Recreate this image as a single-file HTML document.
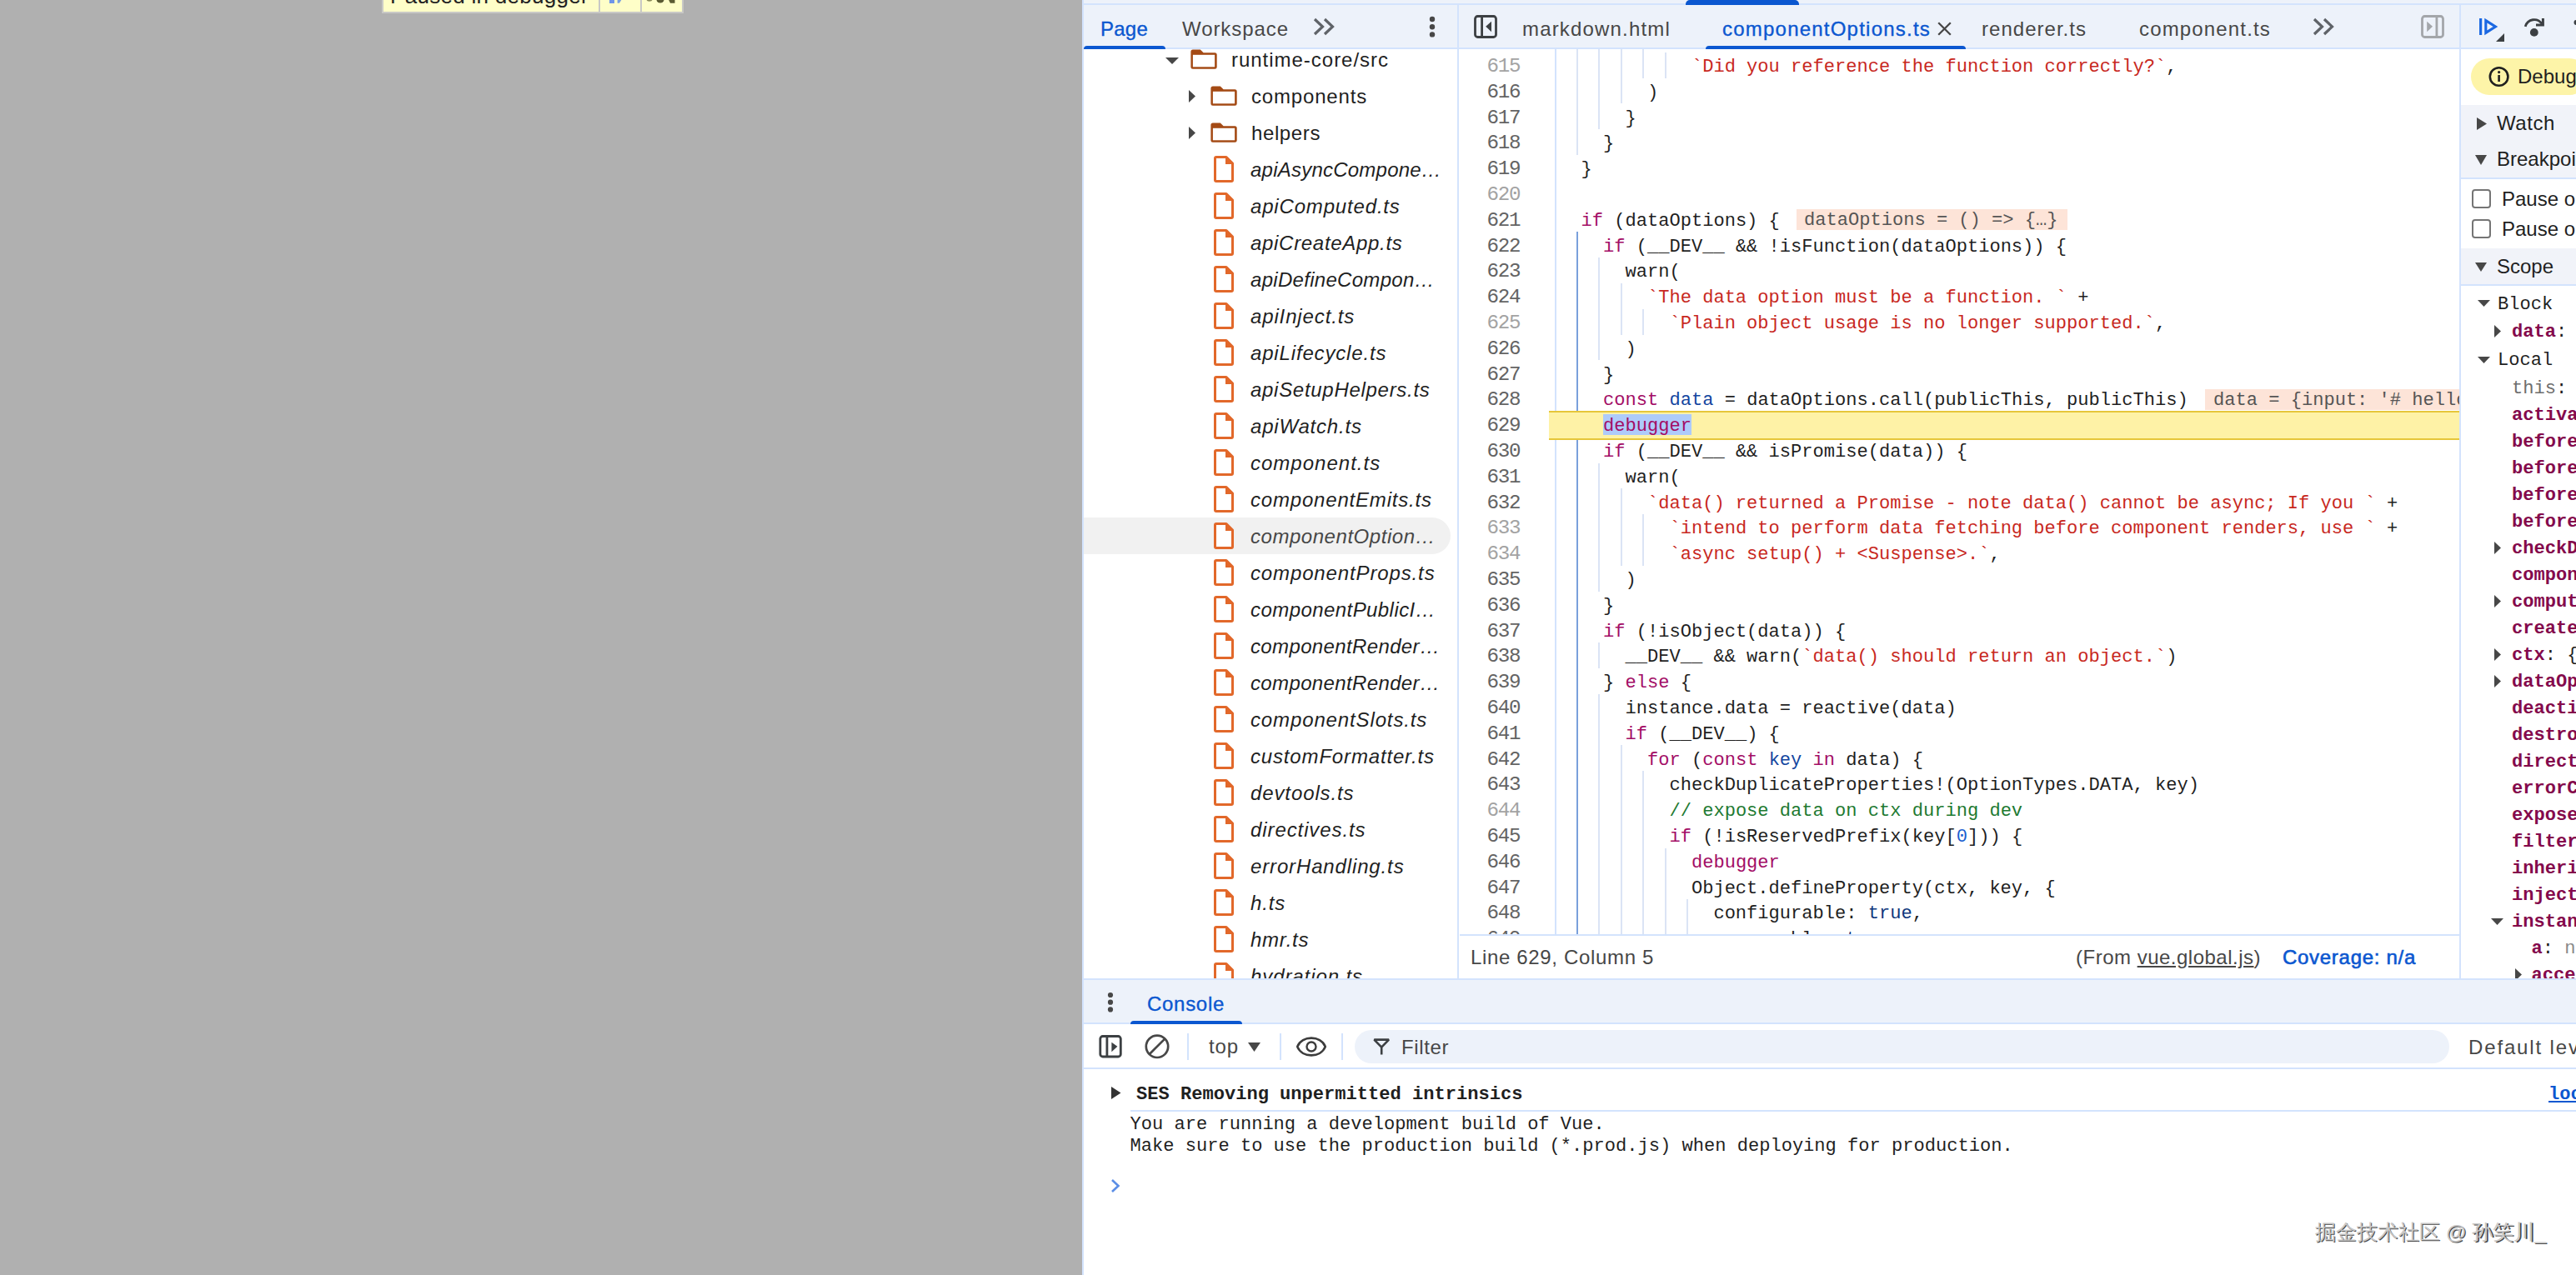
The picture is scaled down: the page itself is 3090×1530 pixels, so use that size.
<!DOCTYPE html>
<html><head><meta charset="utf-8"><title>DevTools</title>
<style>
html,body{margin:0;padding:0;width:3090px;height:1530px;overflow:hidden;background:#fff;}
body{position:relative;font-family:'Liberation Sans', sans-serif;}
div{position:absolute;box-sizing:border-box;}
.t{white-space:pre;}
svg{display:block;}
</style></head><body>
<div style="left:0px;top:0px;width:1298px;height:1530px;background:#b0b0b0;"></div>
<div style="left:458px;top:-40px;width:362px;height:56px;background:#c9c9c6;"></div>
<div style="left:460px;top:-40px;width:258px;height:54px;background:#fefec8;"></div>
<div style="left:720px;top:-40px;width:48px;height:54px;background:#fefec8;"></div>
<div style="left:770px;top:-40px;width:48px;height:54px;background:#fefec8;"></div>
<div class="t" style="left:468.00px;top:-18.01px;font-family:'Liberation Sans', sans-serif;font-size:26px;line-height:26px;color:#222;font-weight:400;font-style:normal;;letter-spacing:0.292px;">Paused in debugger</div>
<div style="left:731px;top:-14px;width:6px;height:18px;background:#6f95e8"></div>
<svg style="position:absolute;left:740px;top:-6px;" width="10" height="10" viewBox="0 0 10 10"><path d="M0.6 0 L9 0 L3 9.8 L0.6 9.8 Z" fill="#7aa0e0"/></svg>
<svg style="position:absolute;left:770px;top:-10px;" width="48" height="14" viewBox="0 0 48 14"><ellipse cx="9" cy="9.5" rx="3.5" ry="2.2" fill="#8a8a5a"/><circle cx="22" cy="9" r="4.6" fill="#5a5a32"/><path d="M29.5 4 L39.5 4 L39.5 13.8 L34 13.8 Z" fill="#5a5a32"/></svg>
<div style="left:1298px;top:0px;width:2px;height:1530px;background:#d3e3fd;"></div>
<div style="left:1300px;top:0px;width:1790px;height:1530px;background:#ffffff;"></div>
<div style="left:1300px;top:0px;width:1790px;height:4px;background:#edf2fa;"></div>
<div style="left:1300px;top:4px;width:1790px;height:2px;background:#d3e3fd;"></div>
<div style="left:2022px;top:0px;width:136px;height:6px;background:#0b57d0;border-radius:5px 5px 0 0"></div>
<div style="left:1300px;top:6px;width:1790px;height:51px;background:#edf2fa;"></div>
<div style="left:1300px;top:57px;width:1790px;height:2px;background:#d3e3fd;"></div>
<div style="left:1748px;top:6px;width:2px;height:1169px;background:#d3e3fd;"></div>
<div style="left:2950px;top:6px;width:2px;height:1169px;background:#d3e3fd;"></div>
<div class="t" style="left:1320.00px;top:22.68px;font-family:'Liberation Sans', sans-serif;font-size:24px;line-height:24px;color:#0b57d0;font-weight:400;font-style:normal;-webkit-text-stroke:0.35px #0b57d0;;letter-spacing:0.234px;">Page</div>
<div style="left:1300px;top:55px;width:98px;height:4px;background:#0b57d0;border-radius:4px 4px 0 0"></div>
<div class="t" style="left:1418.00px;top:22.68px;font-family:'Liberation Sans', sans-serif;font-size:24px;line-height:24px;color:#474747;font-weight:400;font-style:normal;;letter-spacing:0.932px;">Workspace</div>
<svg style="position:absolute;left:1575px;top:21px;" width="26" height="22" viewBox="0 0 26 22"><path d="M2 2 L11.5 11 L2 20 M14 2 L23.5 11 L14 20" fill="none" stroke="#5f6368" stroke-width="3.2"/></svg>
<svg style="position:absolute;left:1712px;top:19px;" width="12" height="27.4" viewBox="0 0 12 27.4"><circle cx="6" cy="4.0" r="3.2" fill="#474747"/><circle cx="6" cy="13.2" r="3.2" fill="#474747"/><circle cx="6" cy="22.4" r="3.2" fill="#474747"/></svg>
<svg style="position:absolute;left:1766px;top:16px;" width="32" height="32" viewBox="0 0 32 32"><rect x="3.5" y="3.5" width="25" height="25" rx="3" fill="none" stroke="#3c4043" stroke-width="2.8"/><rect x="10.2" y="3" width="2.8" height="26" fill="#3c4043"/><path d="M16.2 15.7 L23 9.7 L23 22.2 Z" fill="#3c4043"/></svg>
<div class="t" style="left:1826.00px;top:22.68px;font-family:'Liberation Sans', sans-serif;font-size:24px;line-height:24px;color:#474747;font-weight:400;font-style:normal;;letter-spacing:1.175px;">markdown.html</div>
<div class="t" style="left:2066.00px;top:22.68px;font-family:'Liberation Sans', sans-serif;font-size:24px;line-height:24px;color:#0b57d0;font-weight:400;font-style:normal;-webkit-text-stroke:0.35px #0b57d0;;letter-spacing:1.221px;">componentOptions.ts</div>
<svg style="position:absolute;left:2322px;top:24px;" width="20" height="20" viewBox="0 0 20 20"><path d="M3.2 3.2 L17.8 17.8 M17.8 3.2 L3.2 17.8" stroke="#474747" stroke-width="2.3"/></svg>
<div style="left:2046px;top:55px;width:312px;height:4px;background:#0b57d0;border-radius:4px 4px 0 0"></div>
<div class="t" style="left:2377.00px;top:22.68px;font-family:'Liberation Sans', sans-serif;font-size:24px;line-height:24px;color:#474747;font-weight:400;font-style:normal;;letter-spacing:1.024px;">renderer.ts</div>
<div class="t" style="left:2566.00px;top:22.68px;font-family:'Liberation Sans', sans-serif;font-size:24px;line-height:24px;color:#474747;font-weight:400;font-style:normal;;letter-spacing:1.159px;">component.ts</div>
<svg style="position:absolute;left:2774px;top:21px;" width="26" height="22" viewBox="0 0 26 22"><path d="M2 2 L11.5 11 L2 20 M14 2 L23.5 11 L14 20" fill="none" stroke="#5f6368" stroke-width="3.2"/></svg>
<svg style="position:absolute;left:2902px;top:16px;" width="32" height="32" viewBox="0 0 32 32"><rect x="3.5" y="3.5" width="25" height="25" rx="3" fill="none" stroke="#a3a6aa" stroke-width="2.8"/><rect x="19.5" y="3" width="2.8" height="26" fill="#a3a6aa"/><path d="M16 15.7 L9.2 9.7 L9.2 22.2 Z" fill="#a3a6aa"/></svg>
<svg style="position:absolute;left:2970px;top:18px;" width="40" height="36" viewBox="0 0 40 36"><rect x="4" y="4" width="3.2" height="20" fill="#1b68e2"/><path d="M11.8 6.6 L23.4 14 L11.8 21.4 Z" fill="none" stroke="#1b68e2" stroke-width="3.1"/><path d="M34 22 L34 32 L24 32 Z" fill="#3c4043"/></svg>
<svg style="position:absolute;left:3024px;top:16px;" width="36" height="30" viewBox="0 0 36 30"><path d="M5.2 15.8 C8 6.6, 19.5 4.6, 25.2 12.6" fill="none" stroke="#3c4043" stroke-width="2.8"/><path d="M24.9 6 L27.9 6 L27.9 15.6 L18 15.6 L18 12.6 L24.9 12.6 Z" fill="#3c4043"/><circle cx="15.8" cy="22.9" r="4.9" fill="#3c4043"/></svg>
<svg style="position:absolute;left:3082px;top:20px;" width="8" height="20" viewBox="0 0 8 20"><circle cx="8.5" cy="7" r="3" fill="#3c4043"/></svg>
<div style="left:1300px;top:621px;width:440px;height:44px;background:#f1f1f1;border-radius:0 22px 22px 0"></div>
<svg style="position:absolute;left:1398px;top:68.5px;" width="16" height="8" viewBox="0 0 16 8"><path d="M0 0 L16 0 L8.0 8 Z" fill="#474747"/></svg>
<svg style="position:absolute;left:1428px;top:58.7px;" width="33" height="25" viewBox="0 0 33 25"><path d="M0.4 3 Q0.4 0.5 2.9 0.5 L11.8 0.5 L15.6 4.3 L29.2 4.3 Q31.7 4.3 31.7 6.8 L31.7 21.4 Q31.7 23.8 29.3 23.8 L2.8 23.8 Q0.4 23.8 0.4 21.4 Z" fill="#a44a14"/><rect x="2.9" y="6.8" width="26.2" height="14.5" fill="#fff"/></svg>
<div class="t" style="left:1477.00px;top:59.68px;font-family:'Liberation Sans', sans-serif;font-size:24px;line-height:24px;color:#1f1f1f;font-weight:400;font-style:normal;;letter-spacing:0.977px;">runtime-core/src</div>
<svg style="position:absolute;left:1426px;top:108.0px;" width="8" height="15" viewBox="0 0 8 15"><path d="M0 0 L8 7.5 L0 15 Z" fill="#474747"/></svg>
<svg style="position:absolute;left:1452px;top:102.7px;" width="33" height="25" viewBox="0 0 33 25"><path d="M0.4 3 Q0.4 0.5 2.9 0.5 L11.8 0.5 L15.6 4.3 L29.2 4.3 Q31.7 4.3 31.7 6.8 L31.7 21.4 Q31.7 23.8 29.3 23.8 L2.8 23.8 Q0.4 23.8 0.4 21.4 Z" fill="#a44a14"/><rect x="2.9" y="6.8" width="26.2" height="14.5" fill="#fff"/></svg>
<div class="t" style="left:1501.00px;top:103.68px;font-family:'Liberation Sans', sans-serif;font-size:24px;line-height:24px;color:#1f1f1f;font-weight:400;font-style:normal;;letter-spacing:0.825px;">components</div>
<svg style="position:absolute;left:1426px;top:152.0px;" width="8" height="15" viewBox="0 0 8 15"><path d="M0 0 L8 7.5 L0 15 Z" fill="#474747"/></svg>
<svg style="position:absolute;left:1452px;top:146.7px;" width="33" height="25" viewBox="0 0 33 25"><path d="M0.4 3 Q0.4 0.5 2.9 0.5 L11.8 0.5 L15.6 4.3 L29.2 4.3 Q31.7 4.3 31.7 6.8 L31.7 21.4 Q31.7 23.8 29.3 23.8 L2.8 23.8 Q0.4 23.8 0.4 21.4 Z" fill="#a44a14"/><rect x="2.9" y="6.8" width="26.2" height="14.5" fill="#fff"/></svg>
<div class="t" style="left:1501.00px;top:147.68px;font-family:'Liberation Sans', sans-serif;font-size:24px;line-height:24px;color:#1f1f1f;font-weight:400;font-style:normal;;letter-spacing:0.612px;">helpers</div>
<svg style="position:absolute;left:1456px;top:186.9px;" width="24" height="32" viewBox="0 0 24 32"><path d="M1.5 3 Q1.5 1.5 3 1.5 L15 1.5 L22.5 9 L22.5 29 Q22.5 30.5 21 30.5 L3 30.5 Q1.5 30.5 1.5 29 Z" fill="#fff" stroke="#e2682a" stroke-width="3" stroke-linejoin="round"/><path d="M14 1.5 L22.5 10 L14 10 Z" fill="#e2682a"/></svg>
<div class="t" style="left:1500.00px;top:191.68px;font-family:'Liberation Sans', sans-serif;font-size:24px;line-height:24px;color:#1f1f1f;font-weight:400;font-style:italic;;letter-spacing:0.228px;">apiAsyncCompone…</div>
<svg style="position:absolute;left:1456px;top:230.9px;" width="24" height="32" viewBox="0 0 24 32"><path d="M1.5 3 Q1.5 1.5 3 1.5 L15 1.5 L22.5 9 L22.5 29 Q22.5 30.5 21 30.5 L3 30.5 Q1.5 30.5 1.5 29 Z" fill="#fff" stroke="#e2682a" stroke-width="3" stroke-linejoin="round"/><path d="M14 1.5 L22.5 10 L14 10 Z" fill="#e2682a"/></svg>
<div class="t" style="left:1500.00px;top:235.68px;font-family:'Liberation Sans', sans-serif;font-size:24px;line-height:24px;color:#1f1f1f;font-weight:400;font-style:italic;;letter-spacing:0.829px;">apiComputed.ts</div>
<svg style="position:absolute;left:1456px;top:274.9px;" width="24" height="32" viewBox="0 0 24 32"><path d="M1.5 3 Q1.5 1.5 3 1.5 L15 1.5 L22.5 9 L22.5 29 Q22.5 30.5 21 30.5 L3 30.5 Q1.5 30.5 1.5 29 Z" fill="#fff" stroke="#e2682a" stroke-width="3" stroke-linejoin="round"/><path d="M14 1.5 L22.5 10 L14 10 Z" fill="#e2682a"/></svg>
<div class="t" style="left:1500.00px;top:279.68px;font-family:'Liberation Sans', sans-serif;font-size:24px;line-height:24px;color:#1f1f1f;font-weight:400;font-style:italic;;letter-spacing:0.693px;">apiCreateApp.ts</div>
<svg style="position:absolute;left:1456px;top:318.9px;" width="24" height="32" viewBox="0 0 24 32"><path d="M1.5 3 Q1.5 1.5 3 1.5 L15 1.5 L22.5 9 L22.5 29 Q22.5 30.5 21 30.5 L3 30.5 Q1.5 30.5 1.5 29 Z" fill="#fff" stroke="#e2682a" stroke-width="3" stroke-linejoin="round"/><path d="M14 1.5 L22.5 10 L14 10 Z" fill="#e2682a"/></svg>
<div class="t" style="left:1500.00px;top:323.68px;font-family:'Liberation Sans', sans-serif;font-size:24px;line-height:24px;color:#1f1f1f;font-weight:400;font-style:italic;;letter-spacing:0.298px;">apiDefineCompon…</div>
<svg style="position:absolute;left:1456px;top:362.9px;" width="24" height="32" viewBox="0 0 24 32"><path d="M1.5 3 Q1.5 1.5 3 1.5 L15 1.5 L22.5 9 L22.5 29 Q22.5 30.5 21 30.5 L3 30.5 Q1.5 30.5 1.5 29 Z" fill="#fff" stroke="#e2682a" stroke-width="3" stroke-linejoin="round"/><path d="M14 1.5 L22.5 10 L14 10 Z" fill="#e2682a"/></svg>
<div class="t" style="left:1500.00px;top:367.68px;font-family:'Liberation Sans', sans-serif;font-size:24px;line-height:24px;color:#1f1f1f;font-weight:400;font-style:italic;;letter-spacing:0.864px;">apiInject.ts</div>
<svg style="position:absolute;left:1456px;top:406.9px;" width="24" height="32" viewBox="0 0 24 32"><path d="M1.5 3 Q1.5 1.5 3 1.5 L15 1.5 L22.5 9 L22.5 29 Q22.5 30.5 21 30.5 L3 30.5 Q1.5 30.5 1.5 29 Z" fill="#fff" stroke="#e2682a" stroke-width="3" stroke-linejoin="round"/><path d="M14 1.5 L22.5 10 L14 10 Z" fill="#e2682a"/></svg>
<div class="t" style="left:1500.00px;top:411.68px;font-family:'Liberation Sans', sans-serif;font-size:24px;line-height:24px;color:#1f1f1f;font-weight:400;font-style:italic;;letter-spacing:0.837px;">apiLifecycle.ts</div>
<svg style="position:absolute;left:1456px;top:450.9px;" width="24" height="32" viewBox="0 0 24 32"><path d="M1.5 3 Q1.5 1.5 3 1.5 L15 1.5 L22.5 9 L22.5 29 Q22.5 30.5 21 30.5 L3 30.5 Q1.5 30.5 1.5 29 Z" fill="#fff" stroke="#e2682a" stroke-width="3" stroke-linejoin="round"/><path d="M14 1.5 L22.5 10 L14 10 Z" fill="#e2682a"/></svg>
<div class="t" style="left:1500.00px;top:455.68px;font-family:'Liberation Sans', sans-serif;font-size:24px;line-height:24px;color:#1f1f1f;font-weight:400;font-style:italic;;letter-spacing:0.707px;">apiSetupHelpers.ts</div>
<svg style="position:absolute;left:1456px;top:494.9px;" width="24" height="32" viewBox="0 0 24 32"><path d="M1.5 3 Q1.5 1.5 3 1.5 L15 1.5 L22.5 9 L22.5 29 Q22.5 30.5 21 30.5 L3 30.5 Q1.5 30.5 1.5 29 Z" fill="#fff" stroke="#e2682a" stroke-width="3" stroke-linejoin="round"/><path d="M14 1.5 L22.5 10 L14 10 Z" fill="#e2682a"/></svg>
<div class="t" style="left:1500.00px;top:499.68px;font-family:'Liberation Sans', sans-serif;font-size:24px;line-height:24px;color:#1f1f1f;font-weight:400;font-style:italic;;letter-spacing:0.795px;">apiWatch.ts</div>
<svg style="position:absolute;left:1456px;top:538.9px;" width="24" height="32" viewBox="0 0 24 32"><path d="M1.5 3 Q1.5 1.5 3 1.5 L15 1.5 L22.5 9 L22.5 29 Q22.5 30.5 21 30.5 L3 30.5 Q1.5 30.5 1.5 29 Z" fill="#fff" stroke="#e2682a" stroke-width="3" stroke-linejoin="round"/><path d="M14 1.5 L22.5 10 L14 10 Z" fill="#e2682a"/></svg>
<div class="t" style="left:1500.00px;top:543.68px;font-family:'Liberation Sans', sans-serif;font-size:24px;line-height:24px;color:#1f1f1f;font-weight:400;font-style:italic;;letter-spacing:1.009px;">component.ts</div>
<svg style="position:absolute;left:1456px;top:582.9px;" width="24" height="32" viewBox="0 0 24 32"><path d="M1.5 3 Q1.5 1.5 3 1.5 L15 1.5 L22.5 9 L22.5 29 Q22.5 30.5 21 30.5 L3 30.5 Q1.5 30.5 1.5 29 Z" fill="#fff" stroke="#e2682a" stroke-width="3" stroke-linejoin="round"/><path d="M14 1.5 L22.5 10 L14 10 Z" fill="#e2682a"/></svg>
<div class="t" style="left:1500.00px;top:587.68px;font-family:'Liberation Sans', sans-serif;font-size:24px;line-height:24px;color:#1f1f1f;font-weight:400;font-style:italic;;letter-spacing:0.812px;">componentEmits.ts</div>
<svg style="position:absolute;left:1456px;top:626.9px;" width="24" height="32" viewBox="0 0 24 32"><path d="M1.5 3 Q1.5 1.5 3 1.5 L15 1.5 L22.5 9 L22.5 29 Q22.5 30.5 21 30.5 L3 30.5 Q1.5 30.5 1.5 29 Z" fill="#fff" stroke="#e2682a" stroke-width="3" stroke-linejoin="round"/><path d="M14 1.5 L22.5 10 L14 10 Z" fill="#e2682a"/></svg>
<div class="t" style="left:1500.00px;top:631.68px;font-family:'Liberation Sans', sans-serif;font-size:24px;line-height:24px;color:#474747;font-weight:400;font-style:italic;;letter-spacing:0.539px;">componentOption…</div>
<svg style="position:absolute;left:1456px;top:670.9px;" width="24" height="32" viewBox="0 0 24 32"><path d="M1.5 3 Q1.5 1.5 3 1.5 L15 1.5 L22.5 9 L22.5 29 Q22.5 30.5 21 30.5 L3 30.5 Q1.5 30.5 1.5 29 Z" fill="#fff" stroke="#e2682a" stroke-width="3" stroke-linejoin="round"/><path d="M14 1.5 L22.5 10 L14 10 Z" fill="#e2682a"/></svg>
<div class="t" style="left:1500.00px;top:675.68px;font-family:'Liberation Sans', sans-serif;font-size:24px;line-height:24px;color:#1f1f1f;font-weight:400;font-style:italic;;letter-spacing:0.866px;">componentProps.ts</div>
<svg style="position:absolute;left:1456px;top:714.9px;" width="24" height="32" viewBox="0 0 24 32"><path d="M1.5 3 Q1.5 1.5 3 1.5 L15 1.5 L22.5 9 L22.5 29 Q22.5 30.5 21 30.5 L3 30.5 Q1.5 30.5 1.5 29 Z" fill="#fff" stroke="#e2682a" stroke-width="3" stroke-linejoin="round"/><path d="M14 1.5 L22.5 10 L14 10 Z" fill="#e2682a"/></svg>
<div class="t" style="left:1500.00px;top:719.68px;font-family:'Liberation Sans', sans-serif;font-size:24px;line-height:24px;color:#1f1f1f;font-weight:400;font-style:italic;;letter-spacing:0.431px;">componentPublicI…</div>
<svg style="position:absolute;left:1456px;top:758.9px;" width="24" height="32" viewBox="0 0 24 32"><path d="M1.5 3 Q1.5 1.5 3 1.5 L15 1.5 L22.5 9 L22.5 29 Q22.5 30.5 21 30.5 L3 30.5 Q1.5 30.5 1.5 29 Z" fill="#fff" stroke="#e2682a" stroke-width="3" stroke-linejoin="round"/><path d="M14 1.5 L22.5 10 L14 10 Z" fill="#e2682a"/></svg>
<div class="t" style="left:1500.00px;top:763.68px;font-family:'Liberation Sans', sans-serif;font-size:24px;line-height:24px;color:#1f1f1f;font-weight:400;font-style:italic;;letter-spacing:0.364px;">componentRender…</div>
<svg style="position:absolute;left:1456px;top:802.9px;" width="24" height="32" viewBox="0 0 24 32"><path d="M1.5 3 Q1.5 1.5 3 1.5 L15 1.5 L22.5 9 L22.5 29 Q22.5 30.5 21 30.5 L3 30.5 Q1.5 30.5 1.5 29 Z" fill="#fff" stroke="#e2682a" stroke-width="3" stroke-linejoin="round"/><path d="M14 1.5 L22.5 10 L14 10 Z" fill="#e2682a"/></svg>
<div class="t" style="left:1500.00px;top:807.68px;font-family:'Liberation Sans', sans-serif;font-size:24px;line-height:24px;color:#1f1f1f;font-weight:400;font-style:italic;;letter-spacing:0.364px;">componentRender…</div>
<svg style="position:absolute;left:1456px;top:846.9px;" width="24" height="32" viewBox="0 0 24 32"><path d="M1.5 3 Q1.5 1.5 3 1.5 L15 1.5 L22.5 9 L22.5 29 Q22.5 30.5 21 30.5 L3 30.5 Q1.5 30.5 1.5 29 Z" fill="#fff" stroke="#e2682a" stroke-width="3" stroke-linejoin="round"/><path d="M14 1.5 L22.5 10 L14 10 Z" fill="#e2682a"/></svg>
<div class="t" style="left:1500.00px;top:851.68px;font-family:'Liberation Sans', sans-serif;font-size:24px;line-height:24px;color:#1f1f1f;font-weight:400;font-style:italic;;letter-spacing:0.868px;">componentSlots.ts</div>
<svg style="position:absolute;left:1456px;top:890.9px;" width="24" height="32" viewBox="0 0 24 32"><path d="M1.5 3 Q1.5 1.5 3 1.5 L15 1.5 L22.5 9 L22.5 29 Q22.5 30.5 21 30.5 L3 30.5 Q1.5 30.5 1.5 29 Z" fill="#fff" stroke="#e2682a" stroke-width="3" stroke-linejoin="round"/><path d="M14 1.5 L22.5 10 L14 10 Z" fill="#e2682a"/></svg>
<div class="t" style="left:1500.00px;top:895.68px;font-family:'Liberation Sans', sans-serif;font-size:24px;line-height:24px;color:#1f1f1f;font-weight:400;font-style:italic;;letter-spacing:0.837px;">customFormatter.ts</div>
<svg style="position:absolute;left:1456px;top:934.9px;" width="24" height="32" viewBox="0 0 24 32"><path d="M1.5 3 Q1.5 1.5 3 1.5 L15 1.5 L22.5 9 L22.5 29 Q22.5 30.5 21 30.5 L3 30.5 Q1.5 30.5 1.5 29 Z" fill="#fff" stroke="#e2682a" stroke-width="3" stroke-linejoin="round"/><path d="M14 1.5 L22.5 10 L14 10 Z" fill="#e2682a"/></svg>
<div class="t" style="left:1500.00px;top:939.68px;font-family:'Liberation Sans', sans-serif;font-size:24px;line-height:24px;color:#1f1f1f;font-weight:400;font-style:italic;;letter-spacing:0.888px;">devtools.ts</div>
<svg style="position:absolute;left:1456px;top:978.9px;" width="24" height="32" viewBox="0 0 24 32"><path d="M1.5 3 Q1.5 1.5 3 1.5 L15 1.5 L22.5 9 L22.5 29 Q22.5 30.5 21 30.5 L3 30.5 Q1.5 30.5 1.5 29 Z" fill="#fff" stroke="#e2682a" stroke-width="3" stroke-linejoin="round"/><path d="M14 1.5 L22.5 10 L14 10 Z" fill="#e2682a"/></svg>
<div class="t" style="left:1500.00px;top:983.68px;font-family:'Liberation Sans', sans-serif;font-size:24px;line-height:24px;color:#1f1f1f;font-weight:400;font-style:italic;;letter-spacing:0.907px;">directives.ts</div>
<svg style="position:absolute;left:1456px;top:1022.9000000000001px;" width="24" height="32" viewBox="0 0 24 32"><path d="M1.5 3 Q1.5 1.5 3 1.5 L15 1.5 L22.5 9 L22.5 29 Q22.5 30.5 21 30.5 L3 30.5 Q1.5 30.5 1.5 29 Z" fill="#fff" stroke="#e2682a" stroke-width="3" stroke-linejoin="round"/><path d="M14 1.5 L22.5 10 L14 10 Z" fill="#e2682a"/></svg>
<div class="t" style="left:1500.00px;top:1027.68px;font-family:'Liberation Sans', sans-serif;font-size:24px;line-height:24px;color:#1f1f1f;font-weight:400;font-style:italic;;letter-spacing:0.859px;">errorHandling.ts</div>
<svg style="position:absolute;left:1456px;top:1066.9px;" width="24" height="32" viewBox="0 0 24 32"><path d="M1.5 3 Q1.5 1.5 3 1.5 L15 1.5 L22.5 9 L22.5 29 Q22.5 30.5 21 30.5 L3 30.5 Q1.5 30.5 1.5 29 Z" fill="#fff" stroke="#e2682a" stroke-width="3" stroke-linejoin="round"/><path d="M14 1.5 L22.5 10 L14 10 Z" fill="#e2682a"/></svg>
<div class="t" style="left:1500.00px;top:1071.68px;font-family:'Liberation Sans', sans-serif;font-size:24px;line-height:24px;color:#1f1f1f;font-weight:400;font-style:italic;;letter-spacing:0.853px;">h.ts</div>
<svg style="position:absolute;left:1456px;top:1110.9px;" width="24" height="32" viewBox="0 0 24 32"><path d="M1.5 3 Q1.5 1.5 3 1.5 L15 1.5 L22.5 9 L22.5 29 Q22.5 30.5 21 30.5 L3 30.5 Q1.5 30.5 1.5 29 Z" fill="#fff" stroke="#e2682a" stroke-width="3" stroke-linejoin="round"/><path d="M14 1.5 L22.5 10 L14 10 Z" fill="#e2682a"/></svg>
<div class="t" style="left:1500.00px;top:1115.68px;font-family:'Liberation Sans', sans-serif;font-size:24px;line-height:24px;color:#1f1f1f;font-weight:400;font-style:italic;;letter-spacing:0.753px;">hmr.ts</div>
<svg style="position:absolute;left:1456px;top:1154.9px;" width="24" height="32" viewBox="0 0 24 32"><path d="M1.5 3 Q1.5 1.5 3 1.5 L15 1.5 L22.5 9 L22.5 29 Q22.5 30.5 21 30.5 L3 30.5 Q1.5 30.5 1.5 29 Z" fill="#fff" stroke="#e2682a" stroke-width="3" stroke-linejoin="round"/><path d="M14 1.5 L22.5 10 L14 10 Z" fill="#e2682a"/></svg>
<div class="t" style="left:1500.00px;top:1159.68px;font-family:'Liberation Sans', sans-serif;font-size:24px;line-height:24px;color:#1f1f1f;font-weight:400;font-style:italic;;letter-spacing:0.910px;">hydration.ts</div>
<div style="left:1751px;top:59px;width:1199px;height:1062px;overflow:hidden;">
<div style="left:114px;top:0px;width:2px;height:1062px;background:#d3e3fd;"></div>
<div style="left:140px;top:-27px;width:2px;height:154px;background:#dbe4f5;"></div>
<div style="left:140px;top:219px;width:2px;height:863px;background:#7aa0dc;"></div>
<div style="left:166px;top:-27px;width:2px;height:123px;background:#dbe4f5;"></div>
<div style="left:166px;top:250px;width:2px;height:123px;background:#dbe4f5;"></div>
<div style="left:166px;top:497px;width:2px;height:154px;background:#dbe4f5;"></div>
<div style="left:166px;top:712px;width:2px;height:31px;background:#dbe4f5;"></div>
<div style="left:166px;top:774px;width:2px;height:308px;background:#dbe4f5;"></div>
<div style="left:193px;top:-27px;width:2px;height:92px;background:#dbe4f5;"></div>
<div style="left:193px;top:281px;width:2px;height:62px;background:#dbe4f5;"></div>
<div style="left:193px;top:527px;width:2px;height:93px;background:#dbe4f5;"></div>
<div style="left:193px;top:835px;width:2px;height:247px;background:#dbe4f5;"></div>
<div style="left:219px;top:-27px;width:2px;height:62px;background:#dbe4f5;"></div>
<div style="left:219px;top:312px;width:2px;height:31px;background:#dbe4f5;"></div>
<div style="left:219px;top:558px;width:2px;height:62px;background:#dbe4f5;"></div>
<div style="left:219px;top:866px;width:2px;height:216px;background:#dbe4f5;"></div>
<div style="left:246px;top:4px;width:2px;height:31px;background:#dbe4f5;"></div>
<div style="left:246px;top:959px;width:2px;height:123px;background:#dbe4f5;"></div>
<div style="left:272px;top:1020px;width:2px;height:62px;background:#dbe4f5;"></div>
<div style="left:107px;top:434px;width:1092px;height:35px;background:#e6c63a;"></div>
<div style="left:107px;top:436px;width:1092px;height:31px;background:#fef2a6;"></div>
<div style="left:172px;top:438px;width:106px;height:25px;background:#aecbfa;"></div>
<div style="left:404px;top:192px;width:325px;height:25px;background:#fde4d8;"></div>
<div style="left:894px;top:408px;width:400px;height:25px;background:#fde4d8;"></div>
<div class="t" style="left:32.50px;top:-23.25px;font-family:'Liberation Mono', monospace;font-size:24.2px;line-height:24.2px;color:#a3a3a3;font-weight:400;font-style:normal;letter-spacing:-1.25px;">614</div>
<div class="t" style="left:119.04px;top:-21.32px;font-family:'Liberation Mono', monospace;font-size:22.07px;line-height:22.07px;color:#1f1f1f;">          <span style="color:#c8281e">`Method &quot;</span>${key}<span style="color:#c8281e">&quot; has type &quot;</span>${<span style="color:#a30d66">typeof</span> methodHandler}<span style="color:#c8281e">&quot; in the component definition. `</span> +</div>
<div class="t" style="left:32.50px;top:9.05px;font-family:'Liberation Mono', monospace;font-size:24.2px;line-height:24.2px;color:#a3a3a3;font-weight:400;font-style:normal;letter-spacing:-1.25px;">615</div>
<div class="t" style="left:119.04px;top:10.98px;font-family:'Liberation Mono', monospace;font-size:22.07px;line-height:22.07px;color:#1f1f1f;">            <span style="color:#c8281e">`Did you reference the function correctly?`</span>,</div>
<div class="t" style="left:32.50px;top:39.85px;font-family:'Liberation Mono', monospace;font-size:24.2px;line-height:24.2px;color:#646464;font-weight:400;font-style:normal;letter-spacing:-1.25px;">616</div>
<div class="t" style="left:119.04px;top:41.78px;font-family:'Liberation Mono', monospace;font-size:22.07px;line-height:22.07px;color:#1f1f1f;">        )</div>
<div class="t" style="left:32.50px;top:70.65px;font-family:'Liberation Mono', monospace;font-size:24.2px;line-height:24.2px;color:#646464;font-weight:400;font-style:normal;letter-spacing:-1.25px;">617</div>
<div class="t" style="left:119.04px;top:72.58px;font-family:'Liberation Mono', monospace;font-size:22.07px;line-height:22.07px;color:#1f1f1f;">      }</div>
<div class="t" style="left:32.50px;top:101.45px;font-family:'Liberation Mono', monospace;font-size:24.2px;line-height:24.2px;color:#646464;font-weight:400;font-style:normal;letter-spacing:-1.25px;">618</div>
<div class="t" style="left:119.04px;top:103.38px;font-family:'Liberation Mono', monospace;font-size:22.07px;line-height:22.07px;color:#1f1f1f;">    }</div>
<div class="t" style="left:32.50px;top:132.25px;font-family:'Liberation Mono', monospace;font-size:24.2px;line-height:24.2px;color:#646464;font-weight:400;font-style:normal;letter-spacing:-1.25px;">619</div>
<div class="t" style="left:119.04px;top:134.18px;font-family:'Liberation Mono', monospace;font-size:22.07px;line-height:22.07px;color:#1f1f1f;">  }</div>
<div class="t" style="left:32.50px;top:163.05px;font-family:'Liberation Mono', monospace;font-size:24.2px;line-height:24.2px;color:#a3a3a3;font-weight:400;font-style:normal;letter-spacing:-1.25px;">620</div>
<div class="t" style="left:119.04px;top:164.98px;font-family:'Liberation Mono', monospace;font-size:22.07px;line-height:22.07px;color:#1f1f1f;"></div>
<div class="t" style="left:32.50px;top:193.85px;font-family:'Liberation Mono', monospace;font-size:24.2px;line-height:24.2px;color:#646464;font-weight:400;font-style:normal;letter-spacing:-1.25px;">621</div>
<div class="t" style="left:119.04px;top:195.78px;font-family:'Liberation Mono', monospace;font-size:22.07px;line-height:22.07px;color:#1f1f1f;">  <span style="color:#a30d66">if</span> (dataOptions) {</div>
<div class="t" style="left:32.50px;top:224.65px;font-family:'Liberation Mono', monospace;font-size:24.2px;line-height:24.2px;color:#646464;font-weight:400;font-style:normal;letter-spacing:-1.25px;">622</div>
<div class="t" style="left:119.04px;top:226.58px;font-family:'Liberation Mono', monospace;font-size:22.07px;line-height:22.07px;color:#1f1f1f;">    <span style="color:#a30d66">if</span> (__DEV__ &amp;&amp; !isFunction(dataOptions)) {</div>
<div class="t" style="left:32.50px;top:255.45px;font-family:'Liberation Mono', monospace;font-size:24.2px;line-height:24.2px;color:#646464;font-weight:400;font-style:normal;letter-spacing:-1.25px;">623</div>
<div class="t" style="left:119.04px;top:257.38px;font-family:'Liberation Mono', monospace;font-size:22.07px;line-height:22.07px;color:#1f1f1f;">      warn(</div>
<div class="t" style="left:32.50px;top:286.25px;font-family:'Liberation Mono', monospace;font-size:24.2px;line-height:24.2px;color:#646464;font-weight:400;font-style:normal;letter-spacing:-1.25px;">624</div>
<div class="t" style="left:119.04px;top:288.18px;font-family:'Liberation Mono', monospace;font-size:22.07px;line-height:22.07px;color:#1f1f1f;">        <span style="color:#c8281e">`The data option must be a function. `</span> +</div>
<div class="t" style="left:32.50px;top:317.05px;font-family:'Liberation Mono', monospace;font-size:24.2px;line-height:24.2px;color:#a3a3a3;font-weight:400;font-style:normal;letter-spacing:-1.25px;">625</div>
<div class="t" style="left:119.04px;top:318.98px;font-family:'Liberation Mono', monospace;font-size:22.07px;line-height:22.07px;color:#1f1f1f;">          <span style="color:#c8281e">`Plain object usage is no longer supported.`</span>,</div>
<div class="t" style="left:32.50px;top:347.85px;font-family:'Liberation Mono', monospace;font-size:24.2px;line-height:24.2px;color:#646464;font-weight:400;font-style:normal;letter-spacing:-1.25px;">626</div>
<div class="t" style="left:119.04px;top:349.78px;font-family:'Liberation Mono', monospace;font-size:22.07px;line-height:22.07px;color:#1f1f1f;">      )</div>
<div class="t" style="left:32.50px;top:378.65px;font-family:'Liberation Mono', monospace;font-size:24.2px;line-height:24.2px;color:#646464;font-weight:400;font-style:normal;letter-spacing:-1.25px;">627</div>
<div class="t" style="left:119.04px;top:380.58px;font-family:'Liberation Mono', monospace;font-size:22.07px;line-height:22.07px;color:#1f1f1f;">    }</div>
<div class="t" style="left:32.50px;top:409.45px;font-family:'Liberation Mono', monospace;font-size:24.2px;line-height:24.2px;color:#646464;font-weight:400;font-style:normal;letter-spacing:-1.25px;">628</div>
<div class="t" style="left:119.04px;top:411.38px;font-family:'Liberation Mono', monospace;font-size:22.07px;line-height:22.07px;color:#1f1f1f;">    <span style="color:#a30d66">const</span> <span style="color:#1446a0">data</span> = dataOptions.call(publicThis, publicThis)</div>
<div class="t" style="left:32.50px;top:440.25px;font-family:'Liberation Mono', monospace;font-size:24.2px;line-height:24.2px;color:#646464;font-weight:400;font-style:normal;letter-spacing:-1.25px;">629</div>
<div class="t" style="left:119.04px;top:442.18px;font-family:'Liberation Mono', monospace;font-size:22.07px;line-height:22.07px;color:#1f1f1f;">    <span style="color:#a30d66">debugger</span></div>
<div class="t" style="left:32.50px;top:471.05px;font-family:'Liberation Mono', monospace;font-size:24.2px;line-height:24.2px;color:#646464;font-weight:400;font-style:normal;letter-spacing:-1.25px;">630</div>
<div class="t" style="left:119.04px;top:472.98px;font-family:'Liberation Mono', monospace;font-size:22.07px;line-height:22.07px;color:#1f1f1f;">    <span style="color:#a30d66">if</span> (__DEV__ &amp;&amp; isPromise(data)) {</div>
<div class="t" style="left:32.50px;top:501.85px;font-family:'Liberation Mono', monospace;font-size:24.2px;line-height:24.2px;color:#646464;font-weight:400;font-style:normal;letter-spacing:-1.25px;">631</div>
<div class="t" style="left:119.04px;top:503.78px;font-family:'Liberation Mono', monospace;font-size:22.07px;line-height:22.07px;color:#1f1f1f;">      warn(</div>
<div class="t" style="left:32.50px;top:532.65px;font-family:'Liberation Mono', monospace;font-size:24.2px;line-height:24.2px;color:#646464;font-weight:400;font-style:normal;letter-spacing:-1.25px;">632</div>
<div class="t" style="left:119.04px;top:534.58px;font-family:'Liberation Mono', monospace;font-size:22.07px;line-height:22.07px;color:#1f1f1f;">        <span style="color:#c8281e">`data() returned a Promise - note data() cannot be async; If you `</span> +</div>
<div class="t" style="left:32.50px;top:563.45px;font-family:'Liberation Mono', monospace;font-size:24.2px;line-height:24.2px;color:#a3a3a3;font-weight:400;font-style:normal;letter-spacing:-1.25px;">633</div>
<div class="t" style="left:119.04px;top:565.38px;font-family:'Liberation Mono', monospace;font-size:22.07px;line-height:22.07px;color:#1f1f1f;">          <span style="color:#c8281e">`intend to perform data fetching before component renders, use `</span> +</div>
<div class="t" style="left:32.50px;top:594.25px;font-family:'Liberation Mono', monospace;font-size:24.2px;line-height:24.2px;color:#a3a3a3;font-weight:400;font-style:normal;letter-spacing:-1.25px;">634</div>
<div class="t" style="left:119.04px;top:596.18px;font-family:'Liberation Mono', monospace;font-size:22.07px;line-height:22.07px;color:#1f1f1f;">          <span style="color:#c8281e">`async setup() + &lt;Suspense&gt;.`</span>,</div>
<div class="t" style="left:32.50px;top:625.05px;font-family:'Liberation Mono', monospace;font-size:24.2px;line-height:24.2px;color:#646464;font-weight:400;font-style:normal;letter-spacing:-1.25px;">635</div>
<div class="t" style="left:119.04px;top:626.98px;font-family:'Liberation Mono', monospace;font-size:22.07px;line-height:22.07px;color:#1f1f1f;">      )</div>
<div class="t" style="left:32.50px;top:655.85px;font-family:'Liberation Mono', monospace;font-size:24.2px;line-height:24.2px;color:#646464;font-weight:400;font-style:normal;letter-spacing:-1.25px;">636</div>
<div class="t" style="left:119.04px;top:657.78px;font-family:'Liberation Mono', monospace;font-size:22.07px;line-height:22.07px;color:#1f1f1f;">    }</div>
<div class="t" style="left:32.50px;top:686.65px;font-family:'Liberation Mono', monospace;font-size:24.2px;line-height:24.2px;color:#646464;font-weight:400;font-style:normal;letter-spacing:-1.25px;">637</div>
<div class="t" style="left:119.04px;top:688.58px;font-family:'Liberation Mono', monospace;font-size:22.07px;line-height:22.07px;color:#1f1f1f;">    <span style="color:#a30d66">if</span> (!isObject(data)) {</div>
<div class="t" style="left:32.50px;top:717.45px;font-family:'Liberation Mono', monospace;font-size:24.2px;line-height:24.2px;color:#646464;font-weight:400;font-style:normal;letter-spacing:-1.25px;">638</div>
<div class="t" style="left:119.04px;top:719.38px;font-family:'Liberation Mono', monospace;font-size:22.07px;line-height:22.07px;color:#1f1f1f;">      __DEV__ &amp;&amp; warn(<span style="color:#c8281e">`data() should return an object.`</span>)</div>
<div class="t" style="left:32.50px;top:748.25px;font-family:'Liberation Mono', monospace;font-size:24.2px;line-height:24.2px;color:#646464;font-weight:400;font-style:normal;letter-spacing:-1.25px;">639</div>
<div class="t" style="left:119.04px;top:750.18px;font-family:'Liberation Mono', monospace;font-size:22.07px;line-height:22.07px;color:#1f1f1f;">    } <span style="color:#a30d66">else</span> {</div>
<div class="t" style="left:32.50px;top:779.05px;font-family:'Liberation Mono', monospace;font-size:24.2px;line-height:24.2px;color:#646464;font-weight:400;font-style:normal;letter-spacing:-1.25px;">640</div>
<div class="t" style="left:119.04px;top:780.98px;font-family:'Liberation Mono', monospace;font-size:22.07px;line-height:22.07px;color:#1f1f1f;">      instance.data = reactive(data)</div>
<div class="t" style="left:32.50px;top:809.85px;font-family:'Liberation Mono', monospace;font-size:24.2px;line-height:24.2px;color:#646464;font-weight:400;font-style:normal;letter-spacing:-1.25px;">641</div>
<div class="t" style="left:119.04px;top:811.78px;font-family:'Liberation Mono', monospace;font-size:22.07px;line-height:22.07px;color:#1f1f1f;">      <span style="color:#a30d66">if</span> (__DEV__) {</div>
<div class="t" style="left:32.50px;top:840.65px;font-family:'Liberation Mono', monospace;font-size:24.2px;line-height:24.2px;color:#646464;font-weight:400;font-style:normal;letter-spacing:-1.25px;">642</div>
<div class="t" style="left:119.04px;top:842.58px;font-family:'Liberation Mono', monospace;font-size:22.07px;line-height:22.07px;color:#1f1f1f;">        <span style="color:#a30d66">for</span> (<span style="color:#a30d66">const</span> <span style="color:#1446a0">key</span> <span style="color:#a30d66">in</span> data) {</div>
<div class="t" style="left:32.50px;top:871.45px;font-family:'Liberation Mono', monospace;font-size:24.2px;line-height:24.2px;color:#646464;font-weight:400;font-style:normal;letter-spacing:-1.25px;">643</div>
<div class="t" style="left:119.04px;top:873.38px;font-family:'Liberation Mono', monospace;font-size:22.07px;line-height:22.07px;color:#1f1f1f;">          checkDuplicateProperties!(OptionTypes.DATA, key)</div>
<div class="t" style="left:32.50px;top:902.25px;font-family:'Liberation Mono', monospace;font-size:24.2px;line-height:24.2px;color:#a3a3a3;font-weight:400;font-style:normal;letter-spacing:-1.25px;">644</div>
<div class="t" style="left:119.04px;top:904.18px;font-family:'Liberation Mono', monospace;font-size:22.07px;line-height:22.07px;color:#1f1f1f;">          <span style="color:#1e7a32">// expose data on ctx during dev</span></div>
<div class="t" style="left:32.50px;top:933.05px;font-family:'Liberation Mono', monospace;font-size:24.2px;line-height:24.2px;color:#646464;font-weight:400;font-style:normal;letter-spacing:-1.25px;">645</div>
<div class="t" style="left:119.04px;top:934.98px;font-family:'Liberation Mono', monospace;font-size:22.07px;line-height:22.07px;color:#1f1f1f;">          <span style="color:#a30d66">if</span> (!isReservedPrefix(key[<span style="color:#1a5fd0">0</span>])) {</div>
<div class="t" style="left:32.50px;top:963.85px;font-family:'Liberation Mono', monospace;font-size:24.2px;line-height:24.2px;color:#646464;font-weight:400;font-style:normal;letter-spacing:-1.25px;">646</div>
<div class="t" style="left:119.04px;top:965.78px;font-family:'Liberation Mono', monospace;font-size:22.07px;line-height:22.07px;color:#1f1f1f;">            <span style="color:#a30d66">debugger</span></div>
<div class="t" style="left:32.50px;top:994.65px;font-family:'Liberation Mono', monospace;font-size:24.2px;line-height:24.2px;color:#646464;font-weight:400;font-style:normal;letter-spacing:-1.25px;">647</div>
<div class="t" style="left:119.04px;top:996.58px;font-family:'Liberation Mono', monospace;font-size:22.07px;line-height:22.07px;color:#1f1f1f;">            Object.defineProperty(ctx, key, {</div>
<div class="t" style="left:32.50px;top:1025.45px;font-family:'Liberation Mono', monospace;font-size:24.2px;line-height:24.2px;color:#646464;font-weight:400;font-style:normal;letter-spacing:-1.25px;">648</div>
<div class="t" style="left:119.04px;top:1027.38px;font-family:'Liberation Mono', monospace;font-size:22.07px;line-height:22.07px;color:#1f1f1f;">              configurable: <span style="color:#10387d">true</span>,</div>
<div class="t" style="left:32.50px;top:1056.25px;font-family:'Liberation Mono', monospace;font-size:24.2px;line-height:24.2px;color:#646464;font-weight:400;font-style:normal;letter-spacing:-1.25px;">649</div>
<div class="t" style="left:119.04px;top:1058.18px;font-family:'Liberation Mono', monospace;font-size:22.07px;line-height:22.07px;color:#1f1f1f;">              enumerable: <span style="color:#10387d">true</span>,</div>
<div class="t" style="left:413.00px;top:195.08px;font-family:'Liberation Mono', monospace;font-size:22.07px;line-height:22.07px;color:#555;font-weight:400;font-style:normal;;">dataOptions = () =&gt; {…}</div>
<div class="t" style="left:904.00px;top:411.08px;font-family:'Liberation Mono', monospace;font-size:22.07px;line-height:22.07px;color:#555;font-weight:400;font-style:normal;;">data = {input: &#x27;# hello&#x27;, output: &#x27;&#x27;}</div>
</div>
<div style="left:1751px;top:1121px;width:1199px;height:2px;background:#d3e3fd;"></div>
<div class="t" style="left:1764.00px;top:1136.68px;font-family:'Liberation Sans', sans-serif;font-size:24px;line-height:24px;color:#474747;font-weight:400;font-style:normal;;letter-spacing:0.659px;">Line 629, Column 5</div>
<div class="t" style="left:2490.00px;top:1136.68px;font-family:'Liberation Sans', sans-serif;font-size:24px;line-height:24px;color:#474747;font-weight:400;font-style:normal;;letter-spacing:0.496px;">(From <u>vue.global.js</u>)</div>
<div class="t" style="left:2738.00px;top:1136.68px;font-family:'Liberation Sans', sans-serif;font-size:24px;line-height:24px;color:#0b57d0;font-weight:400;font-style:normal;-webkit-text-stroke:0.6px #0b57d0;;letter-spacing:0.710px;">Coverage: n/a</div>
<div style="left:2964px;top:70px;width:140px;height:44px;background:#fdf4a8;border-radius:22px"></div>
<svg style="position:absolute;left:2984px;top:79px;" width="28" height="28" viewBox="0 0 28 28"><circle cx="13.6" cy="13" r="10.8" fill="none" stroke="#1f1f1f" stroke-width="2.6"/><rect x="12.3" y="11" width="2.6" height="8" fill="#1f1f1f"/><circle cx="13.6" cy="7.6" r="1.6" fill="#1f1f1f"/></svg>
<div class="t" style="left:3020.00px;top:80.18px;font-family:'Liberation Sans', sans-serif;font-size:24px;line-height:24px;color:#1f1f1f;font-weight:400;font-style:normal;;">Debugger paused</div>
<div style="left:2952px;top:126px;width:138px;height:87px;background:#f1f3f9;"></div>
<svg style="position:absolute;left:2971px;top:141px;" width="12" height="15" viewBox="0 0 12 15"><path d="M0 0 L12 7.5 L0 15 Z" fill="#474747"/></svg>
<div class="t" style="left:2995.00px;top:135.68px;font-family:'Liberation Sans', sans-serif;font-size:24px;line-height:24px;color:#1f1f1f;font-weight:400;font-style:normal;;letter-spacing:0.575px;">Watch</div>
<svg style="position:absolute;left:2969px;top:186px;" width="14" height="12" viewBox="0 0 14 12"><path d="M0 0 L14 0 L7.0 12 Z" fill="#474747"/></svg>
<div class="t" style="left:2995.00px;top:179.18px;font-family:'Liberation Sans', sans-serif;font-size:24px;line-height:24px;color:#1f1f1f;font-weight:400;font-style:normal;;">Breakpoints</div>
<div style="left:2952px;top:213px;width:138px;height:2px;background:#d3e3fd;"></div>
<div style="left:2965px;top:227px;width:23px;height:23px;background:transparent;border:2px solid #757575;border-radius:4px;box-sizing:border-box"></div>
<div style="left:2965px;top:263px;width:23px;height:23px;background:transparent;border:2px solid #757575;border-radius:4px;box-sizing:border-box"></div>
<div class="t" style="left:3001.00px;top:226.68px;font-family:'Liberation Sans', sans-serif;font-size:24px;line-height:24px;color:#1f1f1f;font-weight:400;font-style:normal;;">Pause on uncaught exceptions</div>
<div class="t" style="left:3001.00px;top:262.68px;font-family:'Liberation Sans', sans-serif;font-size:24px;line-height:24px;color:#1f1f1f;font-weight:400;font-style:normal;;">Pause on caught exceptions</div>
<div style="left:2952px;top:298px;width:138px;height:43px;background:#f1f3f9;"></div>
<div style="left:2952px;top:341px;width:138px;height:2px;background:#d3e3fd;"></div>
<svg style="position:absolute;left:2969px;top:314.5px;" width="14" height="11" viewBox="0 0 14 11"><path d="M0 0 L14 0 L7.0 11 Z" fill="#474747"/></svg>
<div class="t" style="left:2995.00px;top:307.68px;font-family:'Liberation Sans', sans-serif;font-size:24px;line-height:24px;color:#1f1f1f;font-weight:400;font-style:normal;;">Scope</div>
<div style="left:2952px;top:343px;width:138px;height:832px;overflow:hidden">
<svg style="position:absolute;left:20px;top:17.0px;" width="15" height="8" viewBox="0 0 15 8"><path d="M0 0 L15 0 L7.5 8 Z" fill="#474747"/></svg>
<div class="t" style="left:44.00px;top:11.58px;font-family:'Liberation Mono', monospace;font-size:22.07px;line-height:22.07px;color:#1f1f1f;"><span style="color:#1f1f1f;font-weight:400">Block</span></div>
<svg style="position:absolute;left:40px;top:47px;" width="8" height="15" viewBox="0 0 8 15"><path d="M0 0 L8 7.5 L0 15 Z" fill="#474747"/></svg>
<div class="t" style="left:61.00px;top:45.08px;font-family:'Liberation Mono', monospace;font-size:22.07px;line-height:22.07px;color:#1f1f1f;"><span style="color:#840a4c;font-weight:700">data</span><span style="color:#1f1f1f;font-weight:400">: {input: </span></div>
<svg style="position:absolute;left:20px;top:84.5px;" width="15" height="8" viewBox="0 0 15 8"><path d="M0 0 L15 0 L7.5 8 Z" fill="#474747"/></svg>
<div class="t" style="left:44.00px;top:79.08px;font-family:'Liberation Mono', monospace;font-size:22.07px;line-height:22.07px;color:#1f1f1f;"><span style="color:#1f1f1f;font-weight:400">Local</span></div>
<div class="t" style="left:61.00px;top:112.58px;font-family:'Liberation Mono', monospace;font-size:22.07px;line-height:22.07px;color:#1f1f1f;"><span style="color:#6e6e6e;font-weight:400">this</span><span style="color:#1f1f1f;font-weight:400">: Proxy</span></div>
<div class="t" style="left:61.00px;top:145.08px;font-family:'Liberation Mono', monospace;font-size:22.07px;line-height:22.07px;color:#1f1f1f;"><span style="color:#840a4c;font-weight:700">activated</span><span style="color:#1f1f1f;font-weight:400">: undefined</span></div>
<div class="t" style="left:61.00px;top:177.08px;font-family:'Liberation Mono', monospace;font-size:22.07px;line-height:22.07px;color:#1f1f1f;"><span style="color:#840a4c;font-weight:700">beforeDestroy</span><span style="color:#1f1f1f;font-weight:400">: undefined</span></div>
<div class="t" style="left:61.00px;top:209.08px;font-family:'Liberation Mono', monospace;font-size:22.07px;line-height:22.07px;color:#1f1f1f;"><span style="color:#840a4c;font-weight:700">beforeMount</span><span style="color:#1f1f1f;font-weight:400">: undefined</span></div>
<div class="t" style="left:61.00px;top:241.08px;font-family:'Liberation Mono', monospace;font-size:22.07px;line-height:22.07px;color:#1f1f1f;"><span style="color:#840a4c;font-weight:700">beforeUnmount</span><span style="color:#1f1f1f;font-weight:400">: undefined</span></div>
<div class="t" style="left:61.00px;top:273.08px;font-family:'Liberation Mono', monospace;font-size:22.07px;line-height:22.07px;color:#1f1f1f;"><span style="color:#840a4c;font-weight:700">beforeUpdate</span><span style="color:#1f1f1f;font-weight:400">: undefined</span></div>
<svg style="position:absolute;left:40px;top:307px;" width="8" height="15" viewBox="0 0 8 15"><path d="M0 0 L8 7.5 L0 15 Z" fill="#474747"/></svg>
<div class="t" style="left:61.00px;top:305.08px;font-family:'Liberation Mono', monospace;font-size:22.07px;line-height:22.07px;color:#1f1f1f;"><span style="color:#840a4c;font-weight:700">checkDuplicateProperties</span><span style="color:#1f1f1f;font-weight:400">: undefined</span></div>
<div class="t" style="left:61.00px;top:337.08px;font-family:'Liberation Mono', monospace;font-size:22.07px;line-height:22.07px;color:#1f1f1f;"><span style="color:#840a4c;font-weight:700">components</span><span style="color:#1f1f1f;font-weight:400">: undefined</span></div>
<svg style="position:absolute;left:40px;top:371px;" width="8" height="15" viewBox="0 0 8 15"><path d="M0 0 L8 7.5 L0 15 Z" fill="#474747"/></svg>
<div class="t" style="left:61.00px;top:369.08px;font-family:'Liberation Mono', monospace;font-size:22.07px;line-height:22.07px;color:#1f1f1f;"><span style="color:#840a4c;font-weight:700">computedOptions</span><span style="color:#1f1f1f;font-weight:400">: undefined</span></div>
<div class="t" style="left:61.00px;top:401.08px;font-family:'Liberation Mono', monospace;font-size:22.07px;line-height:22.07px;color:#1f1f1f;"><span style="color:#840a4c;font-weight:700">created</span><span style="color:#1f1f1f;font-weight:400">: undefined</span></div>
<svg style="position:absolute;left:40px;top:435px;" width="8" height="15" viewBox="0 0 8 15"><path d="M0 0 L8 7.5 L0 15 Z" fill="#474747"/></svg>
<div class="t" style="left:61.00px;top:433.08px;font-family:'Liberation Mono', monospace;font-size:22.07px;line-height:22.07px;color:#1f1f1f;"><span style="color:#840a4c;font-weight:700">ctx</span><span style="color:#1f1f1f;font-weight:400">: {</span></div>
<svg style="position:absolute;left:40px;top:467px;" width="8" height="15" viewBox="0 0 8 15"><path d="M0 0 L8 7.5 L0 15 Z" fill="#474747"/></svg>
<div class="t" style="left:61.00px;top:465.08px;font-family:'Liberation Mono', monospace;font-size:22.07px;line-height:22.07px;color:#1f1f1f;"><span style="color:#840a4c;font-weight:700">dataOptions</span><span style="color:#1f1f1f;font-weight:400">: undefined</span></div>
<div class="t" style="left:61.00px;top:497.08px;font-family:'Liberation Mono', monospace;font-size:22.07px;line-height:22.07px;color:#1f1f1f;"><span style="color:#840a4c;font-weight:700">deactivated</span><span style="color:#1f1f1f;font-weight:400">: undefined</span></div>
<div class="t" style="left:61.00px;top:529.08px;font-family:'Liberation Mono', monospace;font-size:22.07px;line-height:22.07px;color:#1f1f1f;"><span style="color:#840a4c;font-weight:700">destroyed</span><span style="color:#1f1f1f;font-weight:400">: undefined</span></div>
<div class="t" style="left:61.00px;top:561.08px;font-family:'Liberation Mono', monospace;font-size:22.07px;line-height:22.07px;color:#1f1f1f;"><span style="color:#840a4c;font-weight:700">directives</span><span style="color:#1f1f1f;font-weight:400">: undefined</span></div>
<div class="t" style="left:61.00px;top:593.08px;font-family:'Liberation Mono', monospace;font-size:22.07px;line-height:22.07px;color:#1f1f1f;"><span style="color:#840a4c;font-weight:700">errorCaptured</span><span style="color:#1f1f1f;font-weight:400">: undefined</span></div>
<div class="t" style="left:61.00px;top:625.08px;font-family:'Liberation Mono', monospace;font-size:22.07px;line-height:22.07px;color:#1f1f1f;"><span style="color:#840a4c;font-weight:700">expose</span><span style="color:#1f1f1f;font-weight:400">: undefined</span></div>
<div class="t" style="left:61.00px;top:657.08px;font-family:'Liberation Mono', monospace;font-size:22.07px;line-height:22.07px;color:#1f1f1f;"><span style="color:#840a4c;font-weight:700">filters</span><span style="color:#1f1f1f;font-weight:400">: undefined</span></div>
<div class="t" style="left:61.00px;top:689.08px;font-family:'Liberation Mono', monospace;font-size:22.07px;line-height:22.07px;color:#1f1f1f;"><span style="color:#840a4c;font-weight:700">inheritAttrs</span><span style="color:#1f1f1f;font-weight:400">: undefined</span></div>
<div class="t" style="left:61.00px;top:721.08px;font-family:'Liberation Mono', monospace;font-size:22.07px;line-height:22.07px;color:#1f1f1f;"><span style="color:#840a4c;font-weight:700">injectOptions</span><span style="color:#1f1f1f;font-weight:400">: undefined</span></div>
<svg style="position:absolute;left:36px;top:758.5px;" width="15" height="8" viewBox="0 0 15 8"><path d="M0 0 L15 0 L7.5 8 Z" fill="#474747"/></svg>
<div class="t" style="left:61.00px;top:753.08px;font-family:'Liberation Mono', monospace;font-size:22.07px;line-height:22.07px;color:#1f1f1f;"><span style="color:#840a4c;font-weight:700">instance</span><span style="color:#1f1f1f;font-weight:400">: undefined</span></div>
<div class="t" style="left:84.50px;top:785.08px;font-family:'Liberation Mono', monospace;font-size:22.07px;line-height:22.07px;color:#1f1f1f;"><span style="color:#840a4c;font-weight:700">a</span><span style="color:#1f1f1f;font-weight:400">: </span><span style="color:#8a8a8a;font-weight:400">null</span></div>
<svg style="position:absolute;left:64.5px;top:819px;" width="8" height="15" viewBox="0 0 8 15"><path d="M0 0 L8 7.5 L0 15 Z" fill="#474747"/></svg>
<div class="t" style="left:84.50px;top:817.08px;font-family:'Liberation Mono', monospace;font-size:22.07px;line-height:22.07px;color:#1f1f1f;"><span style="color:#840a4c;font-weight:700">accessCache</span><span style="color:#1f1f1f;font-weight:400">: {</span></div>
</div>
<div style="left:1300px;top:1175px;width:1790px;height:355px;background:#ffffff;"></div>
<div style="left:1300px;top:1174px;width:1790px;height:2px;background:#d3e3fd;"></div>
<div style="left:1300px;top:1176px;width:1790px;height:51px;background:#edf2fa;"></div>
<div style="left:1300px;top:1227px;width:1790px;height:2px;background:#d3e3fd;"></div>
<svg style="position:absolute;left:1326px;top:1189.5px;" width="12" height="26.4" viewBox="0 0 12 26.4"><circle cx="6" cy="4.0" r="3.1" fill="#474747"/><circle cx="6" cy="12.7" r="3.1" fill="#474747"/><circle cx="6" cy="21.4" r="3.1" fill="#474747"/></svg>
<div class="t" style="left:1376.00px;top:1192.68px;font-family:'Liberation Sans', sans-serif;font-size:24px;line-height:24px;color:#0b57d0;font-weight:400;font-style:normal;-webkit-text-stroke:0.35px #0b57d0;;letter-spacing:0.705px;">Console</div>
<div style="left:1356px;top:1225px;width:134px;height:4px;background:#0b57d0;border-radius:4px 4px 0 0"></div>
<div style="left:1300px;top:1281px;width:1790px;height:2px;background:#d3e3fd;"></div>
<svg style="position:absolute;left:1316px;top:1240px;" width="32" height="32" viewBox="0 0 32 32"><rect x="3.8" y="3.5" width="24.5" height="24.5" rx="3" fill="none" stroke="#3c4043" stroke-width="2.8"/><rect x="10.5" y="3" width="2.8" height="25.5" fill="#3c4043"/><path d="M17.4 10.7 L24.4 15.8 L17.4 22.3 Z" fill="#3c4043"/></svg>
<svg style="position:absolute;left:1372px;top:1240px;" width="32" height="32" viewBox="0 0 32 32"><circle cx="16" cy="15.8" r="13.2" fill="none" stroke="#474747" stroke-width="2.7"/><path d="M6.8 25 L25.2 6.6" stroke="#474747" stroke-width="2.7"/></svg>
<div style="left:1424px;top:1240px;width:2px;height:32px;background:#d3e3fd;"></div>
<div class="t" style="left:1450.00px;top:1244.18px;font-family:'Liberation Sans', sans-serif;font-size:24px;line-height:24px;color:#474747;font-weight:400;font-style:normal;;letter-spacing:0.875px;">top</div>
<svg style="position:absolute;left:1497px;top:1251px;" width="15" height="11" viewBox="0 0 15 11"><path d="M0 0 L15 0 L7.5 11 Z" fill="#474747"/></svg>
<div style="left:1535px;top:1240px;width:2px;height:32px;background:#d3e3fd;"></div>
<svg style="position:absolute;left:1553px;top:1241px;" width="40" height="30" viewBox="0 0 40 30"><path d="M3.2 15 C9 1.2, 31 1.2, 36.8 15 C31 28.8, 9 28.8, 3.2 15 Z" fill="none" stroke="#3c3c3c" stroke-width="2.6" stroke-linejoin="round"/><circle cx="20" cy="15" r="5.5" fill="none" stroke="#3c3c3c" stroke-width="2.4"/></svg>
<div style="left:1609px;top:1240px;width:2px;height:32px;background:#d3e3fd;"></div>
<div style="left:1625px;top:1236px;width:1313px;height:40px;background:#edf2fa;border-radius:20px"></div>
<svg style="position:absolute;left:1645px;top:1245px;" width="24" height="22" viewBox="0 0 24 22"><path d="M3.4 2.6 L21 2.6 L12.2 11.6 Z M12.2 11 L12.2 20.5" fill="none" stroke="#3c4043" stroke-width="2.6" stroke-linejoin="bevel"/></svg>
<div class="t" style="left:1681.00px;top:1244.68px;font-family:'Liberation Sans', sans-serif;font-size:24px;line-height:24px;color:#474747;font-weight:400;font-style:normal;;letter-spacing:0.609px;">Filter</div>
<div class="t" style="left:2961.00px;top:1244.68px;font-family:'Liberation Sans', sans-serif;font-size:24px;line-height:24px;color:#474747;font-weight:400;font-style:normal;;letter-spacing:1.852px;">Default levels</div>
<svg style="position:absolute;left:1333px;top:1304px;" width="11.5" height="15" viewBox="0 0 11.5 15"><path d="M0 0 L11.5 7.5 L0 15 Z" fill="#333"/></svg>
<div class="t" style="left:1363.00px;top:1303.08px;font-family:'Liberation Mono', monospace;font-size:22.07px;line-height:22.07px;color:#1f1f1f;font-weight:700;font-style:normal;;">SES Removing unpermitted intrinsics</div>
<div class="t" style="left:3057.00px;top:1303.08px;font-family:'Liberation Mono', monospace;font-size:22.07px;line-height:22.07px;color:#0b57d0;font-weight:700;font-style:normal;text-decoration:underline;">lockdown-install.js:1</div>
<div style="left:1356px;top:1332px;width:1734px;height:2px;background:#d3e3fd;"></div>
<div class="t" style="left:1355.50px;top:1339.08px;font-family:'Liberation Mono', monospace;font-size:22.07px;line-height:22.07px;color:#1f1f1f;font-weight:400;font-style:normal;;">You are running a development build of Vue.</div>
<div class="t" style="left:1355.50px;top:1364.88px;font-family:'Liberation Mono', monospace;font-size:22.07px;line-height:22.07px;color:#1f1f1f;font-weight:400;font-style:normal;;">Make sure to use the production build (*.prod.js) when deploying for production.</div>
<svg style="position:absolute;left:1331px;top:1414px;" width="14" height="18" viewBox="0 0 14 18"><path d="M3 2 L10.5 9 L3 16" fill="none" stroke="#5b8ee6" stroke-width="2.6"/></svg>
<div class="t" style="left:2777.00px;top:1467.26px;font-family:'Liberation Sans', sans-serif;font-size:24.5px;line-height:24.5px;color:#c8c8c8;font-weight:400;font-style:normal;text-shadow:1.2px 1.2px 0.6px #4a4a4a;letter-spacing:-0.010px;">掘金技术社区 @ 孙笑川_</div>
</body></html>
